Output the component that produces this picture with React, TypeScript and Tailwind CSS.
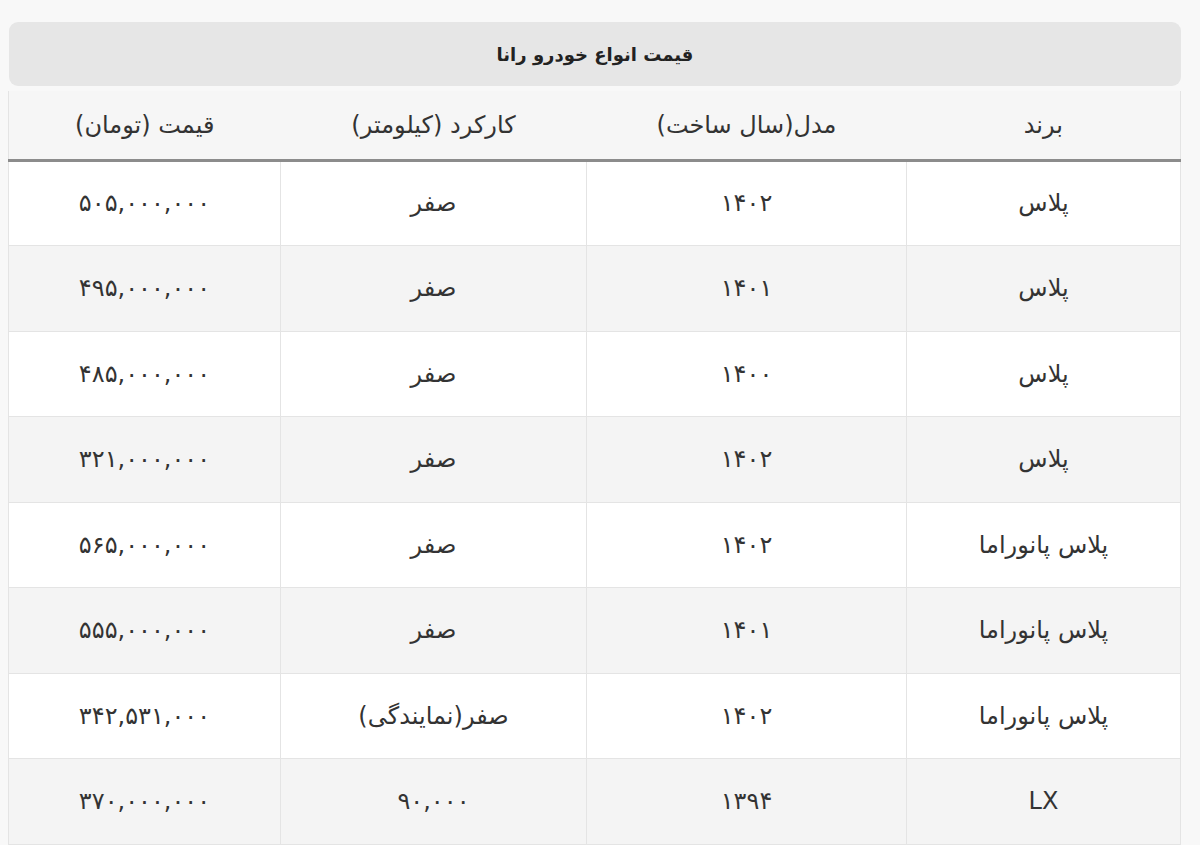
const rows = [
  { brand: "پلاس", model: "۱۴۰۲", km: "صفر", price: "۵۰۵,۰۰۰,۰۰۰" },
  { brand: "پلاس", model: "۱۴۰۱", km: "صفر", price: "۴۹۵,۰۰۰,۰۰۰" },
  { brand: "پلاس", model: "۱۴۰۰", km: "صفر", price: "۴۸۵,۰۰۰,۰۰۰" },
  { brand: "پلاس", model: "۱۴۰۲", km: "صفر", price: "۳۲۱,۰۰۰,۰۰۰" },
  { brand: "پلاس پانوراما", model: "۱۴۰۲", km: "صفر", price: "۵۶۵,۰۰۰,۰۰۰" },
  { brand: "پلاس پانوراما", model: "۱۴۰۱", km: "صفر", price: "۵۵۵,۰۰۰,۰۰۰" },
  { brand: "پلاس پانوراما", model: "۱۴۰۲", km: "صفر(نمایندگی)", price: "۳۴۲,۵۳۱,۰۰۰" },
  { brand: "LX", model: "۱۳۹۴", km: "۹۰,۰۰۰", price: "۳۷۰,۰۰۰,۰۰۰" },
];

const App = () => {
  return (
    <div
      dir="rtl"
      className="w-[1200px] h-[845px] overflow-hidden bg-[#f8f8f8] pt-[22px] pl-[9px] pr-[19px] text-[#333]"
      style={{ fontFamily: '"DejaVu Sans", "Noto Sans", sans-serif' }}
    >
      <div className="h-[64px] rounded-[9px] bg-[#e6e6e6] flex items-center justify-center text-[18px] font-bold text-[#222]">
        قیمت انواع خودرو رانا
      </div>
      <table className="mt-[5px] w-[1172px] border-collapse table-fixed text-[24px]">
        <colgroup>
          <col className="w-[274px]" />
          <col className="w-[320px]" />
          <col className="w-[306px]" />
          <col className="w-[272px]" />
        </colgroup>
        <thead>
          <tr className="h-[69px] bg-[#f6f6f6] border-b-[3px] border-[#8c8c8c]">
            <th className="font-normal border-r border-[#e4e4e4]">برند</th>
            <th className="font-normal">مدل(سال ساخت)</th>
            <th className="font-normal">کارکرد (کیلومتر)</th>
            <th className="font-normal border-l border-[#e4e4e4]">قیمت (تومان)</th>
          </tr>
        </thead>
        <tbody>
          {rows.map((r, i) => (
            <tr key={i} className={`h-[85.5px] ${i % 2 === 0 ? "bg-white" : "bg-[#f4f4f4]"}`}>
              <td className="text-center border border-[#e4e4e4]">{r.brand}</td>
              <td className="text-center border border-[#e4e4e4]">{r.model}</td>
              <td className="text-center border border-[#e4e4e4]">{r.km}</td>
              <td className="text-center border border-[#e4e4e4]">{r.price}</td>
            </tr>
          ))}
        </tbody>
      </table>
    </div>
  );
};

export default App;
